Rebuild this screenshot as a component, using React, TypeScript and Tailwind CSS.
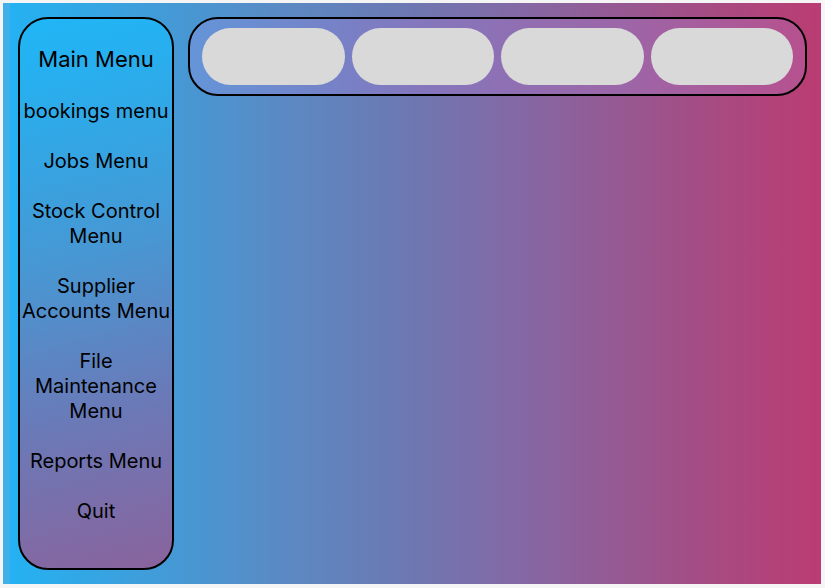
const menuItems = [
  'bookings menu',
  'Jobs Menu',
  'Stock Control Menu',
  'Supplier Accounts Menu',
  'File Maintenance Menu',
  'Reports Menu',
  'Quit',
];

const shortcuts = ['Shortcut 1', 'Shortcut 2', 'Shortcut 3', 'Shortcut 4'];

function Sidebar() {
  return (
    <nav
      aria-labelledby="main-menu-title"
      className="flex w-[156px] shrink-0 flex-col items-center rounded-[30px] border-2 border-black bg-linear-[164deg,#20b6f6_0%,#26b0f0_10%,#4698d4_42%,#6a7ab8_70%,#8a639c_100%] pt-6"
    >
      <h1 id="main-menu-title" className="text-[22px] leading-8">
        Main Menu
      </h1>
      <ul className="mt-6 flex w-full flex-col gap-[25px]">
        {menuItems.map((item) => (
          <li key={item}>
            <button type="button" className="block w-full text-center text-[20px] leading-[25px]">
              {item}
            </button>
          </li>
        ))}
      </ul>
    </nav>
  );
}

function Toolbar() {
  return (
    <header className="flex h-[79px] flex-1 gap-[7px] rounded-[30px] border-2 border-black bg-linear-[90deg,#6495d8_0%,#7583c8_22%,#8477bd_37%,#9c66a8_70%,#b6518e_100%] px-3 py-2">
      {shortcuts.map((name) => (
        <button key={name} type="button" aria-label={name} className="my-px h-[57px] flex-1 rounded-[29px] bg-[#d9d9d9]" />
      ))}
    </header>
  );
}

export default function App() {
  return (
    <div className="flex min-h-screen bg-[#f5f5f5] pt-[3px] pr-1 pb-1 pl-[3px] font-[Inter,sans-serif] text-black">
      <main className="flex flex-1 items-stretch gap-[14px] border-l-[7px] border-[#3fb0e8] bg-linear-[90deg,#24b2f2_0%,#4698d4_21%,#5d88c2_35%,#6a7ab4_47%,#8468a4_63%,#a05088_82%,#ba3c72_100%] pt-[14px] pr-[14px] pb-[14px] pl-2">
        <Sidebar />
        <Toolbar />
      </main>
    </div>
  );
}
